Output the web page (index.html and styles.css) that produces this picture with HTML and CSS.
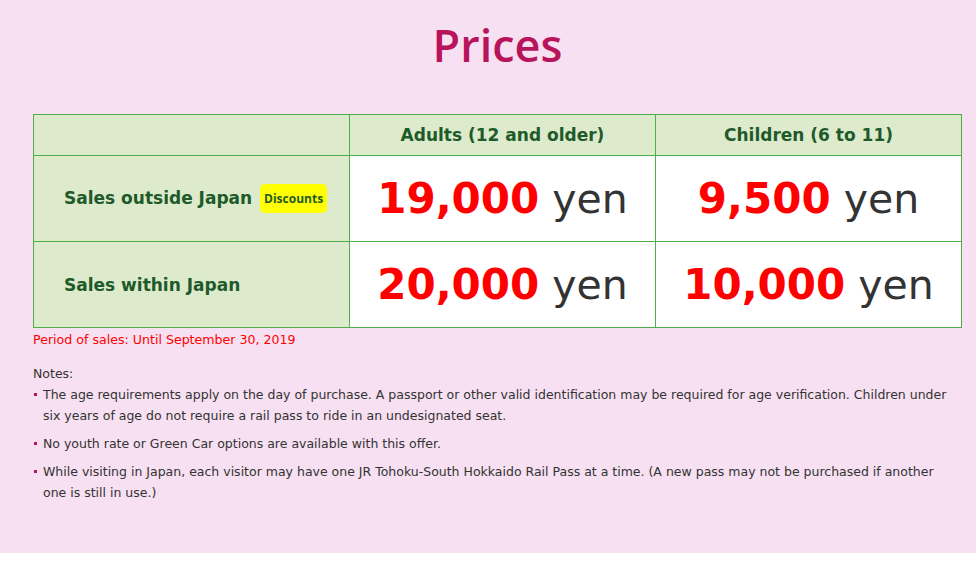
FILE: index.html
```html
<!DOCTYPE html>
<html lang="en">
<head>
<meta charset="UTF-8">
<meta name="viewport" content="width=device-width, initial-scale=1.0">
<link rel="stylesheet" href="styles.css">
<title>Prices</title>
</head>
<body>
<div class="page">
  <h1 class="title">Prices</h1>

  <table class="price-table">
    <tr>
      <th class="blank"></th>
      <th>Adults (12 and older)</th>
      <th>Children (6 to 11)</th>
    </tr>
    <tr class="row-tall">
      <th class="row-head">Sales outside Japan <span class="badge">Discounts</span></th>
      <td><span class="num">19,000</span> yen</td>
      <td><span class="num">9,500</span> yen</td>
    </tr>
    <tr class="row-tall">
      <th class="row-head">Sales within Japan</th>
      <td><span class="num">20,000</span> yen</td>
      <td><span class="num">10,000</span> yen</td>
    </tr>
  </table>

  <p class="period">Period of sales: Until September 30, 2019</p>

  <div class="notes">
    <p class="notes-title">Notes:</p>
    <ul>
      <li>The age requirements apply on the day of purchase. A passport or other valid identification may be required for age verification. Children under six years of age do not require a rail pass to ride in an undesignated seat.</li>
      <li>No youth rate or Green Car options are available with this offer.</li>
      <li>While visiting in Japan, each visitor may have one JR Tohoku-South Hokkaido Rail Pass at a time. (A new pass may not be purchased if another one is still in use.)</li>
    </ul>
  </div>
</div>
</body>
</html>
```

FILE: styles.css
```css
body {
  margin: 0;
  background: #fff;
  font-family: "DejaVu Sans", Verdana, sans-serif;
}
.page {
  background: #f7e0f1;
  height: 553px;
  box-sizing: border-box;
  padding: 17px 14px 0 33px;
}
.title {
  margin: 0 0 42px;
  text-align: center;
  font-family: "Open Sans", sans-serif;
  font-weight: 600;
  font-size: 45px;
  line-height: 55px;
  color: #b8145c;
}
.price-table {
  width: 929px;
  border-collapse: collapse;
  table-layout: fixed;
}
.price-table th,
.price-table td {
  border: 1px solid #4fae4a;
}
.price-table th {
  background: #ddeacc;
  color: #1e5a2a;
  font-size: 17px;
  font-weight: bold;
  height: 40px;
  padding: 0;
}
.price-table th.blank {
  width: 315px;
}
.price-table th:nth-child(2) {
  width: 305px;
}
.row-tall th,
.row-tall td {
  height: 85px;
}
.price-table th.row-head {
  text-align: left;
  padding-left: 30px;
}
.price-table td {
  background: #fff;
  text-align: center;
  font-size: 41px;
  color: #333;
  padding: 0;
}
.num {
  color: #ff0000;
  font-weight: bold;
  font-size: 42px;
}
.badge {
  display: inline-block;
  margin-left: 2px;
  padding: 4px 4px;
  background: #ffff00;
  border-radius: 5px;
  font-family: "Open Sans", sans-serif;
  font-size: 12px;
  font-weight: 700;
  line-height: 21px;
  color: #1e5a2a;
  vertical-align: middle;
}
.period {
  margin: 4px 0 0;
  font-size: 12.6px;
  color: #ff0000;
  line-height: 16px;
}
.notes {
  margin-top: 15px;
  padding-right: 10px;
  font-size: 12.5px;
  color: #333;
  line-height: 21px;
}
.notes-title {
  margin: 0;
}
.notes ul {
  list-style: none;
  margin: 0;
  padding: 0;
}
.notes li {
  position: relative;
  padding-left: 10px;
  margin-bottom: 7px;
}
.notes li::before {
  content: "";
  position: absolute;
  left: 1px;
  top: 9px;
  width: 3px;
  height: 3px;
  background: #b8145c;
}
```
